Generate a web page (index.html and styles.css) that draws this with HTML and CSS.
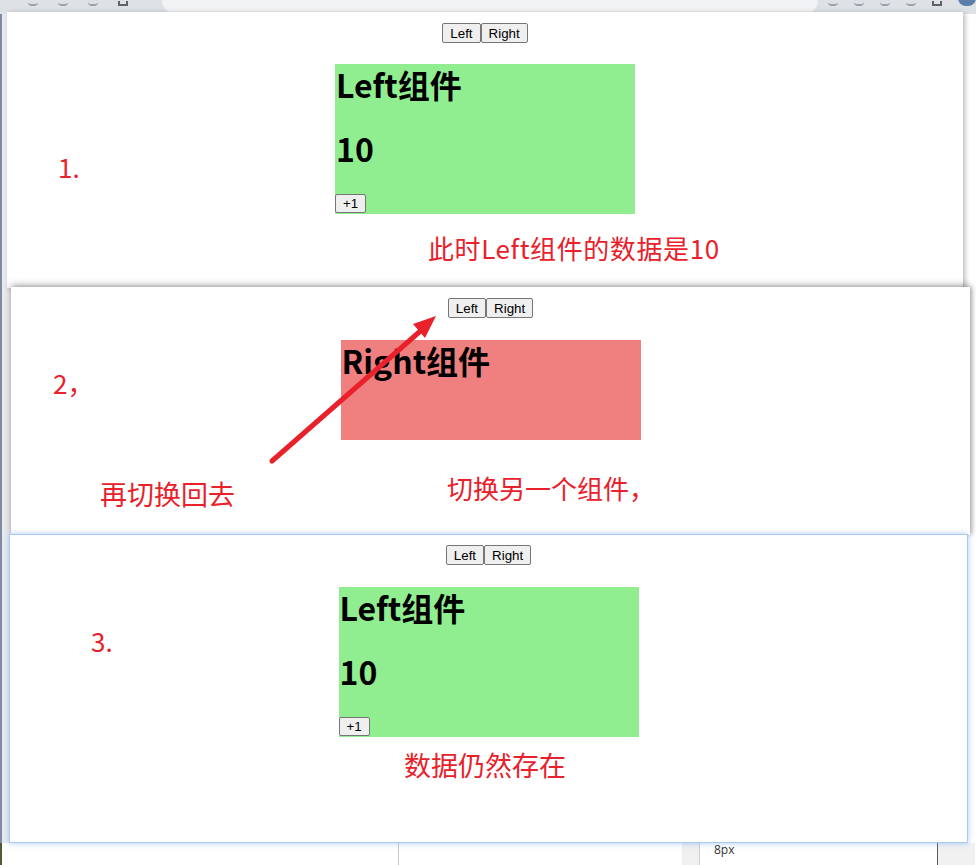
FILE: index.html
```html
<!DOCTYPE html>
<html lang="zh-CN">
<head>
<meta charset="utf-8">
<title>keep-alive 演示</title>
<link rel="stylesheet" href="styles.css">
</head>
<body>
<div class="desktop">
  <div class="chrome-bar">
    <div class="nav-icons"><span class="dot"></span><span class="dot"></span><span class="dot"></span><span class="dot sq"></span></div>
    <div class="omnibox"><span class="omni-text">localhost:8080</span></div>
    <div class="ext-icons"><span class="dot"></span><span class="dot"></span><span class="dot"></span><span class="dot"></span><span class="dot sq"></span><span class="avatar"></span></div>
  </div>
  <div class="left-rail"></div>
  <div class="bottom-strip">
    <div class="bs-left"></div>
    <div class="bs-mid"></div>
    <div class="bs-gray"></div>
    <div class="bs-text">8px</div>
    <div class="bs-right"></div>
  </div>

  <section class="win win1">
    <div class="tabs"><button class="btn">Left</button><button class="btn">Right</button></div>
    <div class="comp green">
      <h1 class="title">Left组件</h1>
      <h1 class="title num">10</h1>
      <button class="btn plus">+1</button>
    </div>
    <span class="note n1">1.</span>
    <span class="note n1b">此时Left组件的数据是10</span>
  </section>

  <section class="win win2">
    <div class="tabs"><button class="btn">Left</button><button class="btn">Right</button></div>
    <div class="comp red">
      <h1 class="title">Right组件</h1>
    </div>
    <span class="note n2">2，</span>
    <span class="note big n2b">再切换回去</span>
    <span class="note n2c">切换另一个组件，</span>
    <svg class="arrow" width="959" height="248" viewBox="0 0 959 248">
      <line x1="261" y1="174" x2="414" y2="40" stroke="#e8212b" stroke-width="5" stroke-linecap="round"/>
      <polygon points="425,29 402,37 414,51" fill="#e8212b"/>
    </svg>
  </section>

  <section class="win win3">
    <div class="tabs"><button class="btn">Left</button><button class="btn">Right</button></div>
    <div class="comp green">
      <h1 class="title">Left组件</h1>
      <h1 class="title num">10</h1>
      <button class="btn plus">+1</button>
    </div>
    <span class="note n3">3.</span>
    <span class="note big n3b">数据仍然存在</span>
  </section>
</div>
</body>
</html>
```

FILE: styles.css
```css
* { box-sizing: border-box; }
html, body { margin: 0; padding: 0; }
body {
  background: #ffffff;
  font-family: "Noto Sans CJK SC", "Noto Sans", sans-serif;
}
.desktop {
  position: relative;
  width: 976px;
  height: 865px;
  overflow: hidden;
  background: #ffffff;
}

/* underlying browser chrome */
.chrome-bar {
  position: absolute;
  left: 0; top: 0;
  width: 976px; height: 14px;
  background: #dee1e6;
  display: flex;
  align-items: flex-end;
}
.nav-icons, .ext-icons {
  display: flex;
  gap: 20px;
  align-items: flex-end;
  padding: 0 0 8px 28px;
}
.dot { width: 10px; height: 4px; border-bottom: 2px solid #9aa0a6; border-radius: 0 0 6px 6px; }
.dot.sq { border: 2px solid #5f6368; border-top: none; border-radius: 0; height: 5px; }
.omnibox {
  margin-left: 34px;
  width: 752px; height: 14px;
  background: #f1f3f4;
  border-radius: 0 0 14px 14px;
  display: flex;
  align-items: flex-end;
  padding-left: 40px;
}
.omni-text { display: none; }
.ext-icons { padding-left: 10px; gap: 16px; }
.avatar { width: 18px; height: 8px; border-radius: 0 0 9px 9px; background: #5b7fa8; }

.left-rail {
  position: absolute;
  left: 0; top: 14px;
  width: 12px; height: 830px;
  background: #e9ebee;
  border-left: 2px solid #7d8ca3;
}
.bottom-strip {
  position: absolute;
  left: 0; top: 843px;
  width: 976px; height: 22px;
  display: flex;
  background: #ffffff;
}
.bs-left { width: 2px; background: #4f5a36; }
.bs-mid { width: 397px; border-right: 1px solid #c8c8c8; }
.bs-gray { margin-left: 283px; width: 18px; background: #f0f0f0; border-right: 1px solid #d0d0d0; }
.bs-text {
  width: 237px;
  padding: 0 0 0 14px;
  font-family: "Open Sans", "DejaVu Sans", sans-serif;
  font-size: 12px;
  line-height: 14px;
  color: #333;
}
.bs-right { width: 38px; background: #f1f1f1; border-left: 1px solid #5a5a5a; }

/* screenshot windows */
.win {
  position: absolute;
  background: #ffffff;
  display: flex;
  flex-direction: column;
  align-items: center;
  padding-top: 11px;
}
.win1 { left: 7px; top: 12px; width: 956px; height: 276px; box-shadow: 2px 1px 5px rgba(0,0,0,0.28); }
.win2 { left: 11px; top: 287px; width: 959px; height: 248px; box-shadow: 0 -2px 7px rgba(0,0,0,0.3), 2px 0 4px rgba(0,0,0,0.2); }
.win3 {
  left: 9px; top: 534px; width: 959px; height: 309px;
  padding-top: 10px;
  border: 1px solid #a9c8f2;
  box-shadow: 0 0 6px rgba(110,160,235,0.55);
}

.tabs { display: flex; }
.btn {
  font-family: "Liberation Sans", Arial, sans-serif;
  font-size: 13.33px;
  line-height: 15px;
  color: #000;
  background: #efefef;
  border: 1px solid #767676;
  border-radius: 2px;
  padding: 1px 7px;
  margin: 0;
  height: 20px;
}
.comp {
  margin-top: 22px;
  width: 300px;
  display: flex;
  flex-direction: column;
  align-items: flex-start;
}
.win1 .comp { margin-top: 21px; }
.green { background: #90ee90; height: 150px; }
.red { background: #f08080; height: 100px; }
.title {
  margin: 0;
  font-family: "Noto Sans CJK SC", "Noto Sans", sans-serif;
  font-size: 32px;
  font-weight: 700;
  line-height: 40px;
  height: 44px;
  color: #000;
  padding-left: 1px;
}
.num { margin-top: 20px; }
.plus { margin-top: 22px; height: 19px; width: 31px; padding: 0; text-align: center; }

.note {
  position: absolute;
  color: #e8212b;
  font-family: "Noto Sans CJK SC", "Noto Sans", sans-serif;
  font-size: 26px;
  line-height: 38px;
  white-space: nowrap;
}
.note.big { font-size: 27px; line-height: 38px; }
.n1 { left: 51px; top: 136px; }
.n1b { left: 421px; top: 217px; letter-spacing: 0.6px; }
.n2 { left: 42px; top: 77px; }
.n2b { left: 89px; top: 188px; }
.n2c { left: 436px; top: 182px; }
.n3 { left: 81px; top: 87px; }
.n3b { left: 394px; top: 211px; }
.arrow { position: absolute; left: 0; top: 0; pointer-events: none; }
```
